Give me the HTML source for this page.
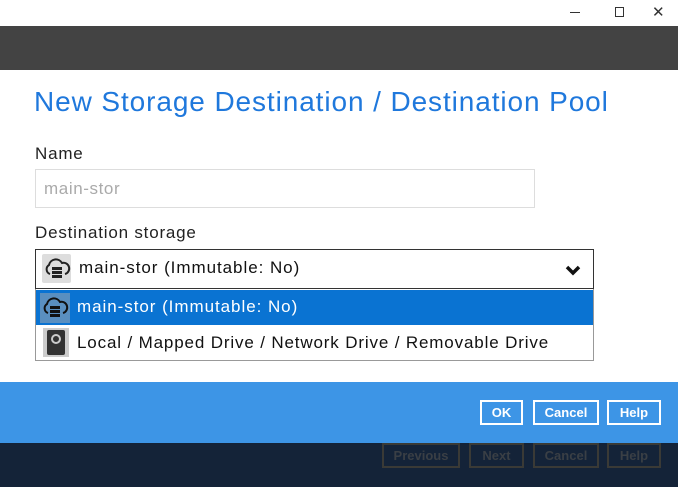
<!DOCTYPE html>
<html><head><style>
*{margin:0;padding:0;box-sizing:border-box}
body{width:678px;height:487px;overflow:hidden;background:#fff;font-family:"Liberation Sans","DejaVu Sans",sans-serif;position:relative}
.a{position:absolute}
.btn{position:absolute;border:2px solid #fff;color:#fff;font-weight:bold;font-size:13px;text-align:center;line-height:21px;height:25px;top:400px}
.btn2{position:absolute;border:2px solid #3a3a36;color:#3a3f45;font-weight:bold;font-size:13px;text-align:center;line-height:21px;height:25px;top:443px}
</style></head><body>
<div class="a" style="left:0;top:0;width:678px;height:26px;background:#fff"></div>
<div class="a" style="left:570px;top:12px;width:10px;height:1px;background:#333"></div>
<div class="a" style="left:615px;top:7px;width:9px;height:10px;border:1.5px solid #333"></div>
<div class="a" style="left:652px;top:3px;font-size:15px;color:#333">✕</div>
<div class="a" style="left:0;top:26px;width:678px;height:44px;background:#434343"></div>
<div class="a" style="left:34px;top:86px;font-size:28px;color:#1f78dc;letter-spacing:0.9px">New Storage Destination / Destination Pool</div>
<div class="a" style="left:35px;top:144px;font-size:17px;color:#222;letter-spacing:0.8px">Name</div>
<div class="a" style="left:35px;top:169px;width:500px;height:39px;border:1px solid #ddd;color:#aaa;font-size:17px;padding:9px 8px;letter-spacing:0.6px">main-stor</div>
<div class="a" style="left:35px;top:223px;font-size:17px;color:#222;letter-spacing:0.8px">Destination storage</div>
<div class="a" style="left:35px;top:249px;width:559px;height:40px;border:1.5px solid #333;background:#fff"></div>
<div class="a" style="left:42px;top:254px;width:29px;height:29px;background:#ddd;border-radius:2px"></div>
<svg class="a" style="left:43px;top:256px" width="28" height="26" viewBox="0 0 28 26"><path d="M7 18 A5 5 0 0 1 6 9 A7 7 0 0 1 19 7 A5 5 0 0 1 22 18" fill="none" stroke="#222" stroke-width="2"/><rect x="9" y="11" width="10" height="3" fill="#222"/><rect x="9" y="15" width="10" height="3" fill="#222"/><rect x="9" y="19" width="10" height="3" fill="#222"/></svg>
<div class="a" style="left:79px;top:258px;font-size:17px;color:#111;letter-spacing:0.95px">main-stor (Immutable: No)</div>
<svg class="a" style="left:565px;top:264px" width="16" height="12" viewBox="0 0 16 12"><path d="M2 3 L8 9 L14 3" fill="none" stroke="#111" stroke-width="3.5"/></svg>
<div class="a" style="left:35px;top:289px;width:559px;height:72px;border:1px solid #999;border-top:none;background:#fff"></div>
<div class="a" style="left:36px;top:290px;width:557px;height:35px;background:#0a73d2"></div>
<div class="a" style="left:40px;top:293px;width:30px;height:30px;background:#5a8fc0"></div>
<svg class="a" style="left:41px;top:295px" width="28" height="26" viewBox="0 0 28 26"><path d="M7 18 A5 5 0 0 1 6 9 A7 7 0 0 1 19 7 A5 5 0 0 1 22 18" fill="none" stroke="#111" stroke-width="2"/><rect x="9" y="11" width="10" height="3" fill="#111"/><rect x="9" y="15" width="10" height="3" fill="#111"/><rect x="9" y="19" width="10" height="3" fill="#111"/></svg>
<div class="a" style="left:77px;top:297px;font-size:17px;color:#fff;letter-spacing:0.95px">main-stor (Immutable: No)</div>
<div class="a" style="left:43px;top:328px;width:26px;height:29px;background:#ccc"></div>
<div class="a" style="left:47px;top:330px;width:18px;height:25px;background:#333;border-radius:2px"></div>
<div class="a" style="left:51px;top:334px;width:10px;height:10px;border:2px solid #ccc;border-radius:50%"></div>
<div class="a" style="left:77px;top:333px;font-size:17px;color:#111;letter-spacing:0.85px">Local / Mapped Drive / Network Drive / Removable Drive</div>
<div class="a" style="left:0;top:382px;width:678px;height:61px;background:#3d95e6"></div>
<div class="btn" style="left:480px;width:43px">OK</div>
<div class="btn" style="left:533px;width:66px">Cancel</div>
<div class="btn" style="left:607px;width:54px">Help</div>
<div class="a" style="left:0;top:443px;width:678px;height:44px;background:#142338"></div>
<div class="btn2" style="left:382px;width:78px">Previous</div>
<div class="btn2" style="left:469px;width:55px">Next</div>
<div class="btn2" style="left:533px;width:66px">Cancel</div>
<div class="btn2" style="left:607px;width:54px">Help</div>
</body></html>
